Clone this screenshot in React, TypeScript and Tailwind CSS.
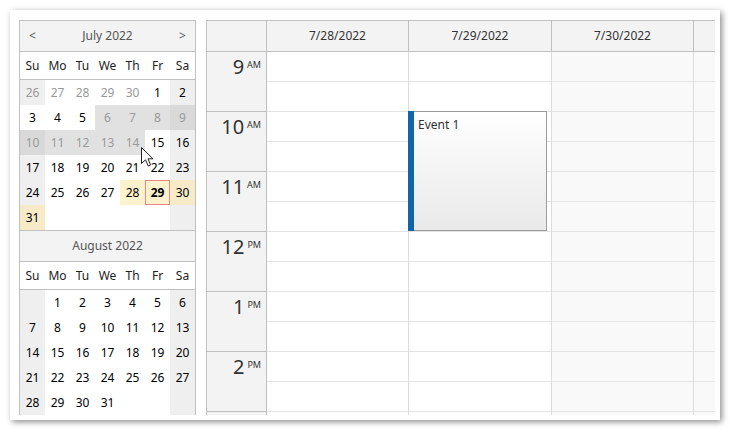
const font = "font-['Noto_Sans',sans-serif]";

type Cell = [string, string];

const dayNames = ["Su", "Mo", "Tu", "We", "Th", "Fr", "Sa"];

const july: Cell[][] = [
    [["26", "ow"], ["27", "o"], ["28", "o"], ["29", "o"], ["30", "o"], ["1", ""], ["2", "w"]],
    [["3", ""], ["4", ""], ["5", ""], ["6", "d"], ["7", "d"], ["8", "d"], ["9", "dw"]],
    [["10", "dw"], ["11", "d"], ["12", "d"], ["13", "d"], ["14", "d"], ["15", ""], ["16", "w"]],
    [["17", "w"], ["18", ""], ["19", ""], ["20", ""], ["21", ""], ["22", ""], ["23", "w"]],
    [["24", "w"], ["25", ""], ["26", ""], ["27", ""], ["28", "s"], ["29", "t"], ["30", "sw"]],
    [["31", "sw"], ["", ""], ["", ""], ["", ""], ["", ""], ["", ""], ["", "w"]],
];

const august: Cell[][] = [
    [["", "w"], ["1", ""], ["2", ""], ["3", ""], ["4", ""], ["5", ""], ["6", "w"]],
    [["7", "w"], ["8", ""], ["9", ""], ["10", ""], ["11", ""], ["12", ""], ["13", "w"]],
    [["14", "w"], ["15", ""], ["16", ""], ["17", ""], ["18", ""], ["19", ""], ["20", "w"]],
    [["21", "w"], ["22", ""], ["23", ""], ["24", ""], ["25", ""], ["26", ""], ["27", "w"]],
    [["28", "w"], ["29", ""], ["30", ""], ["31", ""], ["", ""], ["", ""], ["", "w"]],
    [["", "w"], ["", ""], ["", ""], ["", ""], ["", ""], ["", ""], ["", "w"]],
];

const cellClass: Record<string, string> = {
    "": "bg-white text-black",
    w: "bg-[#efefef] text-black",
    o: "bg-white text-[#999]",
    ow: "bg-[#efefef] text-[#999]",
    d: "bg-[#e1e1e1] text-[#999]",
    dw: "bg-[#d9d9d9] text-[#999]",
    s: "bg-[#fcf2cd] text-black",
    sw: "bg-[#f6ebc6] text-black",
    t: "bg-[#fcf2cd] text-black font-bold border border-[#ee8585]",
};

function Month({ title, rows, nav }: { title: string; rows: Cell[][]; nav?: boolean }) {
    return (
        <div className="border-t border-[#c0c0c0]">
            <div className="h-[31px] grid grid-cols-7 items-center bg-[#f3f3f3] border-b border-[#c0c0c0] text-[12px] text-[#555]">
                <div className="text-center">{nav ? "<" : ""}</div>
                <div className="col-span-5 text-center">{title}</div>
                <div className="text-center">{nav ? ">" : ""}</div>
            </div>
            <div className="h-[28px] grid grid-cols-7 items-center border-b border-[#c0c0c0] text-[12px] text-[#222]">
                {dayNames.map((d) => (
                    <div key={d} className="text-center">{d}</div>
                ))}
            </div>
            {rows.map((row, i) => (
                <div key={i} className="grid grid-cols-7">
                    {row.map(([txt, kind], j) => (
                        <div key={j} className={`h-[25px] flex items-center justify-center text-[12px] ${cellClass[kind]}`}>
                            {txt}
                        </div>
                    ))}
                </div>
            ))}
        </div>
    );
}

// last entry is the row cut off at the bottom, so it has no label
const hours = [
    ["9", "AM"],
    ["10", "AM"],
    ["11", "AM"],
    ["12", "PM"],
    ["1", "PM"],
    ["2", "PM"],
    ["", ""],
];

// 7/31 is only partly visible, its centered title falls outside the view
const columns = [
    { date: "7/28/2022", w: "w-[142px]", bg: "bg-white" },
    { date: "7/29/2022", w: "w-[143px]", bg: "bg-white", event: true },
    { date: "7/30/2022", w: "w-[142px]", bg: "bg-[#f9f9f9]" },
    { date: "", w: "w-[142px]", bg: "bg-[#f9f9f9]" },
];

function Calendar() {
    return (
        <div className="flex-1 min-w-0 overflow-hidden border-l border-t border-[#c0c0c0]">
            <div className="flex h-[31px] bg-[#f3f3f3] border-b border-[#c0c0c0] text-[12px] text-[#333]">
                <div className="w-[60px] shrink-0 border-r border-[#c0c0c0]" />
                {columns.map((c, i) => (
                    <div key={i} className={`${c.w} shrink-0 border-r border-[#c0c0c0] flex items-center justify-center`}>
                        {c.date}
                    </div>
                ))}
            </div>
            <div className="flex">
                <div className="w-[60px] shrink-0 bg-[#f3f3f3] border-r border-[#c0c0c0]">
                    {hours.map(([h, ap], i) => (
                        <div key={i} className="h-[60px] border-b border-[#c0c0c0] flex justify-end items-start pr-[5px] pt-[5px] text-[#333]">
                            <span className="text-[20px] leading-none">{h}</span>
                            <span className="text-[9px] leading-none ml-[3px] mt-[3px]">{ap}</span>
                        </div>
                    ))}
                </div>
                {columns.map((c, i) => (
                    <div key={i} className={`${c.w} shrink-0 relative border-r border-[#dcdcdc] ${c.bg}`}>
                        {Array.from({ length: 12 }).map((_, j) => (
                            <div key={j} className="h-[30px] border-b border-[#e3e3e3]" />
                        ))}
                        {c.event && (
                            <div className="absolute left-[-1px] top-[59px] w-[139px] h-[120px] border border-l-0 border-[#9a9a9a] bg-gradient-to-b from-white to-[#e9e9e9] pl-[10px] pt-[4px] text-[12px] text-[#333]">
                                <div className="absolute left-0 top-[-1px] bottom-[-1px] w-[6px] bg-[#1066a8]" />
                                Event 1
                            </div>
                        )}
                    </div>
                ))}
            </div>
        </div>
    );
}

function Cursor() {
    return (
        <svg className="absolute left-[141px] top-[147px]" width="13" height="21" viewBox="0 0 13 21">
            <path d="M0.5 0.5 L0.5 16.5 L4.5 12.8 L7.2 19 L9.6 18 L7 11.8 L12 11.8 Z" fill="#fff" stroke="#222" strokeWidth="1" strokeLinejoin="round" />
        </svg>
    );
}

export default function App() {
    return (
        <div className={`relative w-[730px] h-[430px] bg-white p-[10px] ${font}`}>
            <div className="w-full h-full bg-white shadow-[2px_2px_6px_rgba(0,0,0,0.45)] pt-[10px] pl-[9px] pr-[5px] pb-[5px]">
                <div className="flex h-full overflow-hidden gap-[10px]">
                    <div className="w-[177px] shrink-0 border-l border-r border-[#c0c0c0]">
                        <Month title="July 2022" rows={july} nav />
                        <Month title="August 2022" rows={august} />
                    </div>
                    <Calendar />
                </div>
            </div>
            <Cursor />
        </div>
    );
}
